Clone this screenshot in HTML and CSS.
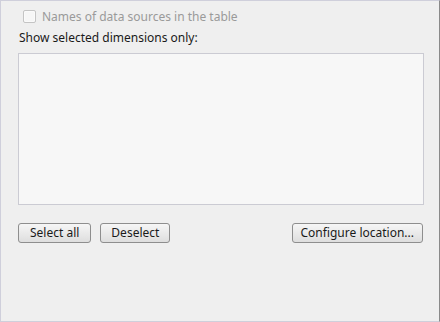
FILE: index.html
```html
<!DOCTYPE html>
<html lang="en">
<head>
  <meta charset="UTF-8" />
  <title>Table options</title>
  <link rel="stylesheet" href="styles.css">
</head>
<body>
  <div class="panel">
    <label class="check disabled">
      <span class="box"></span>
      Names of data sources in the table
    </label>
    <div class="caption">Show selected dimensions only:</div>
    <div class="list"></div>
    <div class="actions">
      <button type="button" class="wide">Select all</button>
      <button type="button">Deselect</button>
      <button type="button" class="right">Configure location...</button>
    </div>
  </div>
</body>
</html>
```

FILE: styles.css
```css
html, body {
  margin: 0;
  padding: 0;
}
body {
  font-family: 'Noto Sans', 'Open Sans', sans-serif;
  font-size: 12px;
  color: #1a1a1a;
  background: #efefef;
}
.panel {
  box-sizing: border-box;
  width: 440px;
  height: 322px;
  border-left: 1px solid #cfcfdb;
  border-top: 1px solid #cfcfdb;
  border-bottom: 1px solid #cfcfdb;
  border-right: 1px solid #8a8a8a;
  padding: 8px 15px 0 17px;
}
.check {
  display: flex;
  align-items: center;
  gap: 6px;
  margin-left: 5px;
  height: 14px;
}
.check.disabled {
  color: #9a9a9a;
}
.box {
  width: 11px;
  height: 11px;
  border: 1px solid #c4c4c4;
  border-radius: 2px;
  background: #f6f6f6;
  box-shadow: inset 0 0 0 1px #fafafa;
}
.caption {
  margin-top: 8px;
  margin-left: 1px;
  height: 14px;
  line-height: 14px;
}
.list {
  margin-top: 8px;
  height: 150px;
  background: #f7f7f7;
  border: 1px solid #cbcbd3;
}
.actions {
  display: flex;
  gap: 9px;
  margin-top: 18px;
}
button {
  font-family: inherit;
  font-size: 12px;
  color: #1a1a1a;
  height: 20px;
  padding: 0 10px;
  border: 1px solid #8e8e8e;
  border-radius: 3px;
  background: linear-gradient(#f6f6f6, #dedede);
  line-height: 16px;
}
button.wide {
  padding: 0 11px;
}
.actions .right {
  margin-left: auto;
  margin-right: 1px;
  padding: 0 8px;
}
```
